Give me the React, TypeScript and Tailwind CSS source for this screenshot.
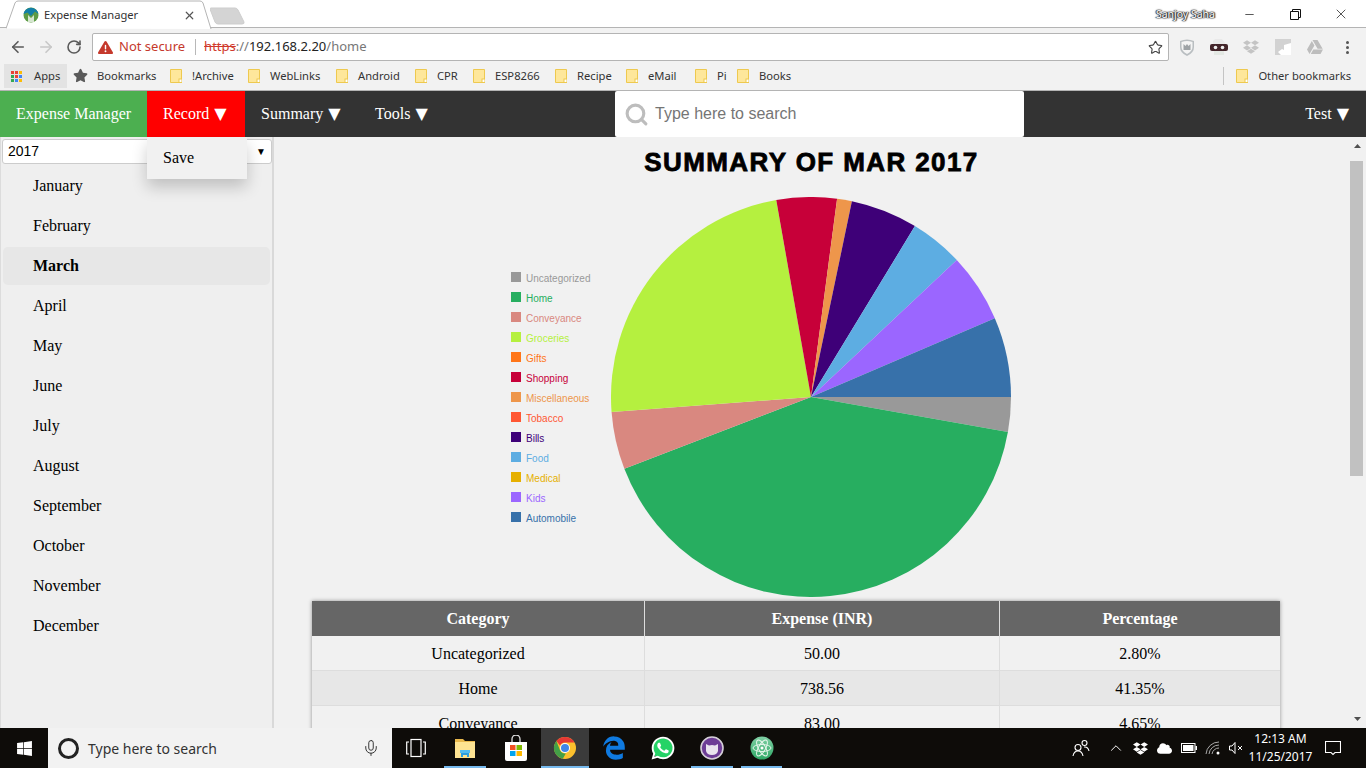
import React from "react";
import { ArrowLeft, ArrowRight, RotateCw, Star, Mic, ChevronUp, Minus, X, Search } from "lucide-react";
import { FaDropbox, FaGoogleDrive, FaWhatsapp, FaEdgeLegacy, FaCloud, FaWindows, FaStar, FaTriangleExclamation } from "react-icons/fa6";

const ui = "font-['Noto_Sans','Open_Sans',sans-serif]";
const serif = "font-['Liberation_Serif','Times_New_Roman',serif]";

const bookmarks = [
  { n: "!Archive", w: "w-[78px]" },
  { n: "WebLinks", w: "w-[88px]" },
  { n: "Android", w: "w-[79px]" },
  { n: "CPR", w: "w-[58px]" },
  { n: "ESP8266", w: "w-[82px]" },
  { n: "Recipe", w: "w-[71px]" },
  { n: "eMail", w: "w-[69px]" },
  { n: "Pi", w: "w-[42px]" },
  { n: "Books", w: "w-[70px]" },
];
const months = ["January","February","March","April","May","June","July","August","September","October","November","December"];
const legend: [string,string][] = [
  ["Uncategorized","#999999"],["Home","#27AE60"],["Conveyance","#D98880"],["Groceries","#B5F03F"],["Gifts","#FF7518"],["Shopping","#C70039"],["Miscellaneous","#EE964B"],["Tobacco","#FF5733"],["Bills","#3E0078"],["Food","#5DADE2"],["Medical","#E6B000"],["Kids","#9B66FF"],["Automobile","#3771AA"],
];
const wedges: [number,number,string][] = [
  [0,10.08,"#999999"],[10.08,158.94,"#27AE60"],[158.94,175.68,"#D98880"],[175.68,260,"#B5F03F"],[260,277.5,"#C70039"],[277.5,281.8,"#EE964B"],[281.8,301.3,"#3E0078"],[301.3,316.8,"#5DADE2"],[316.8,336.8,"#9B66FF"],[336.8,360,"#3771AA"],
];
function wedge(a: number, b: number) {
  const r = 200, c = 200, p = Math.PI / 180;
  const x1 = c + r * Math.cos(a * p), y1 = c + r * Math.sin(a * p), x2 = c + r * Math.cos(b * p), y2 = c + r * Math.sin(b * p);
  return `M${c} ${c}L${x1} ${y1}A${r} ${r} 0 ${b - a > 180 ? 1 : 0} 1 ${x2} ${y2}Z`;
}
const rows = [["Uncategorized","50.00","2.80%"],["Home","738.56","41.35%"],["Conveyance","83.00","4.65%"]];

function Tri() {
  return <span className="font-['DejaVu_Sans',sans-serif] text-[16px] leading-none"> ▼</span>;
}
function Folder() {
  return <svg width="12" height="14" viewBox="0 0 12 14" className="shrink-0"><path d="M.5.5h11v10l-2.500 3H.5z" fill="#fee79b" stroke="#eec94f"/><rect x="9" y="10" width="3" height="3.500" fill="#fff" stroke="#eec94f" strokeWidth="1"/></svg>;
}
function Favicon() {
  return <svg width="16" height="16" viewBox="0 0 16 16"><circle cx="8" cy="8" r="7.500" fill="#5d9b45"/><path d="M.6 7A7.500 7.500 0 0 1 15.400 7L12 4.500 8 9 4.500 5.500z" fill="#137fa8"/><path d="M5 15V8l3 3 3-3v7z" fill="#fff" opacity=".75"/></svg>;
}
function ChromeIcon() {
  return <svg width="24" height="24" viewBox="0 0 24 24"><circle cx="12" cy="12" r="11" fill="#fbc02d"/><path d="M12 1a11 11 0 0 1 9.500 5.500H12A5.500 5.500 0 0 0 7 9.500L3.400 5A11 11 0 0 1 12 1z" fill="#e53935"/><path d="M3.400 5 7.200 14.700a5.500 5.500 0 0 0 5.600 2.800L9.800 22.800A11 11 0 0 1 3.400 5z" fill="#43a047"/><circle cx="12" cy="12" r="5" fill="#fff"/><circle cx="12" cy="12" r="4" fill="#3f86e8"/></svg>;
}
function Folder2() {
  return <svg width="24" height="24" viewBox="0 0 24 24"><path d="M2 3h8l2 2h10v17H2z" fill="#e9b94d"/><rect x="2" y="6" width="20" height="16" fill="#fde392"/><path d="M8 21v-4h8v4h-2v-2h-4v2z" fill="#2d9fe0"/><rect x="7" y="14" width="10" height="3" fill="#54bdf1"/></svg>;
}
function StoreIcon() {
  return <svg width="24" height="26" viewBox="0 0 24 26"><path d="M8 7V4a4 4 0 0 1 8 0v3" fill="none" stroke="#ddd" strokeWidth="1.300"/><path d="M1 7h22v17a2 2 0 0 1-2 2H3a2 2 0 0 1-2-2z" fill="#fff"/><rect x="6" y="10" width="5.500" height="5" fill="#f25022"/><rect x="12.500" y="10" width="5.500" height="5" fill="#7fba00"/><rect x="6" y="16" width="5.500" height="5" fill="#00a4ef"/><rect x="12.500" y="16" width="5.500" height="5" fill="#ffb900"/></svg>;
}
function Whatsapp() {
  return (
    <span className="relative flex h-[26px] w-[26px] items-center justify-center">
      <span className="absolute h-[21px] w-[21px] rounded-full bg-[#25d366]" />
      <FaWhatsapp size={26} className="relative text-white" />
    </span>
  );
}
function CatIcon() {
  return <svg width="24" height="24" viewBox="0 0 24 24"><circle cx="12" cy="12" r="11" fill="#6d3d96" stroke="#d5d0d8" strokeWidth="1.600"/><path d="M6 8l3 1.500q3-.8 6 0L18 8v7q-1 4-6 4t-6-4z" fill="#e9e4ee"/></svg>;
}
function AtomIcon() {
  return <svg width="24" height="24" viewBox="0 0 24 24"><defs><linearGradient id="ag" x1="0" y1="0" x2="0" y2="1"><stop offset="0" stopColor="#7fd0a4"/><stop offset="1" stopColor="#2fa866"/></linearGradient></defs><circle cx="12" cy="12" r="11.500" fill="url(#ag)"/><g fill="none" stroke="#e4f5ea" strokeWidth="1"><ellipse cx="12" cy="12" rx="9" ry="3.500"/><ellipse cx="12" cy="12" rx="9" ry="3.500" transform="rotate(60 12 12)"/><ellipse cx="12" cy="12" rx="9" ry="3.500" transform="rotate(120 12 12)"/></g><circle cx="12" cy="12" r="1.500" fill="#fff"/></svg>;
}
function Cell({ w, active, line, children }: { w: string; active?: boolean; line?: boolean; children: React.ReactNode }) {
  return (
    <div className={`relative flex h-10 ${w} items-center justify-center ${active ? "bg-[#3b3b3b]" : ""}`}>
      {children}
      {line && <div className={`absolute bottom-0 h-[2px] bg-[#76b9ed] ${active ? "left-0 right-0" : "left-1 right-1"}`} />}
    </div>
  );
}

export default function App() {
  return (
    <div className={`flex h-[768px] w-[1366px] flex-col overflow-hidden bg-white ${ui}`}>
      {/* tab strip */}
      <div className="relative flex h-[28px] shrink-0 items-start border-b border-b-[#b4b4b4] bg-white">
        <div className="relative z-10 ml-[6px] flex h-[28px] w-[204px] items-center pl-[17px] pt-[2px]">
          <svg className="absolute left-0 top-0" width="206" height="29" viewBox="0 0 206 29"><path d="M0 28.500 9 3q1-2 3-2h182q2 0 3 2l8 26" fill="#fff" stroke="#b4b4b4"/></svg>
          <div className="relative flex w-[180px] items-center">
            <Favicon />
            <span className="ml-[5px] text-[11.2px] leading-none text-[#333]">Expense Manager</span>
            <X size={13} strokeWidth={2.2} className="absolute right-[7px] text-[#555]" />
          </div>
        </div>
        <svg className="mt-[7px]" width="35" height="18" viewBox="0 0 35 18"><path d="M1 1h24q2 0 3 2l6 12q.5 2-2 2H8q-2 0-3-2L0 2q0-1 1-1z" fill="#d4d4d4" stroke="#cdcdcd"/></svg>
        <div className="ml-auto flex h-[28px] items-center pr-[2px]">
          <span className="mr-[11px] text-[10.500px] leading-none text-white [text-shadow:0_0_1px_#222,0_0_2px_#222,1px_0_1px_#333,-1px_0_1px_#333]">Sanjoy Saha</span>
          <div className="flex h-[28px] w-[46px] items-center justify-center"><Minus size={13} strokeWidth={1.2} className="text-black" /></div>
          <div className="flex h-[28px] w-[46px] items-center justify-center">
            <svg width="11" height="11" viewBox="0 0 11 11" fill="none" stroke="#111"><path d="M.5 2.500h8v8h-8zM2.500 2.500v-2h8v8h-2"/></svg>
          </div>
          <div className="flex h-[28px] w-[46px] items-center justify-center"><X size={16} strokeWidth={1} className="text-black" /></div>
        </div>
      </div>
      {/* toolbar */}
      <div className="flex h-[34px] shrink-0 items-center bg-[#f2f2f2] pt-[4px]">
        <div className="flex w-[92px] shrink-0 items-center pl-[9px]">
          <ArrowLeft size={18} strokeWidth={2.2} className="text-[#5a5a5a]" />
          <ArrowRight size={18} strokeWidth={2.2} className="ml-[10px] text-[#c8c8c8]" />
          <RotateCw size={16} strokeWidth={2.4} className="ml-[11px] text-[#5a5a5a]" />
        </div>
        <div className="flex h-[28px] w-[1077px] shrink-0 items-center rounded-[2px] border border-[#b4b4b4] bg-white pl-[5px] text-[13px]">
          <FaTriangleExclamation size={15} className="text-[#c5392c]" />
          <span className="ml-[6px] text-[#c5392c]">Not secure</span>
          <span className="ml-[10px] h-[16px] w-px bg-[#b8b8b8]" />
          <span className="ml-[8px] text-[#d0392c] line-through">https</span>
          <span className="text-[#777]">://</span>
          <span className="text-[#222]">192.168.2.20</span>
          <span className="text-[#777]">/home</span>
          <Star size={15} strokeWidth={1.8} className="ml-auto mr-[5px] text-[#444]" />
        </div>
        <div className="flex flex-1 items-center pl-[2px]">
          <div className="flex w-[32px] justify-center"><svg width="16" height="17" viewBox="0 0 16 17"><path d="M1 2q7-3 14 0v6q0 6-7 9-7-3-7-9z" fill="#b9bec1"/><path d="M2.500 3q5.500-2 11 0v5q0 4-5.500 7-5.500-3-5.500-7z" fill="#f4f4f4"/><path d="M4.500 11V5l2 2 1.500-2 1.500 2 2-2v6z" fill="#9ea3a6"/></svg></div>
          <div className="flex w-[32px] justify-center"><svg width="18" height="16" viewBox="0 0 18 16"><path d="M5 0h7l3 4v3H3V2z" fill="#e9e9e9"/><rect x="0" y="5" width="18" height="7" rx="2" fill="#43252a"/><circle cx="5.500" cy="8.500" r="1.800" fill="#eee"/><circle cx="12.500" cy="8.500" r="1.800" fill="#eee"/><path d="M4 12h10v4H4z" fill="#e4e9e4"/></svg></div>
          <div className="flex w-[32px] justify-center"><FaDropbox size={16} className="text-[#c4c4c4]" /></div>
          <div className="flex w-[32px] justify-center"><svg width="16" height="16" viewBox="0 0 16 16"><rect width="16" height="16" fill="#d2d2d2"/><path d="M16 4v12H6l-3-3 4-3 2 1V6z" fill="#fff"/></svg></div>
          <div className="flex w-[32px] justify-center"><FaGoogleDrive size={16} className="text-[#bdbdbd]" /></div>
          <div className="flex w-[32px] flex-col items-center gap-[2px]"><span className="h-[3px] w-[3px] rounded-full bg-[#555]"/><span className="h-[3px] w-[3px] rounded-full bg-[#555]"/><span className="h-[3px] w-[3px] rounded-full bg-[#555]"/></div>
        </div>
      </div>
      {/* bookmarks */}
      <div className="flex h-[29px] shrink-0 items-center border-b border-b-[#b4b4b4] bg-[#f2f2f2] text-[11.200px] text-[#333]">
        <div className="ml-[4px] flex h-[24px] w-[63px] items-center bg-[#e3e3e3] pl-[7px]">
          <div className="grid grid-cols-3 gap-[1px]">
            {["#ea4335","#ea4335","#fbbc05","#34a853","#ea4335","#4285f4","#34a853","#4285f4","#fbbc05"].map((c, i) => <svg key={i} width="3" height="3"><rect width="3" height="3" fill={c}/></svg>)}
          </div>
          <span className="ml-[12px]">Apps</span>
        </div>
        <div className="flex w-[103px] items-center pl-[6px]">
          <FaStar size={15} className="text-[#5a5a5a]" />
          <span className="ml-[9px]">Bookmarks</span>
        </div>
        {bookmarks.map((b) => (
          <div key={b.n} className={`flex items-center ${b.w}`}>
            <Folder /><span className="ml-[10px]">{b.n}</span>
          </div>
        ))}
        <div className="ml-auto flex items-center pr-[15px]">
          <span className="mr-[12px] h-[18px] w-px bg-[#c4c4c4]" />
          <Folder /><span className="ml-[10px]">Other bookmarks</span>
        </div>
      </div>
      {/* nav */}
      <div className={`relative z-20 flex h-[46px] shrink-0 items-stretch bg-[#333] text-[16px] text-white ${serif}`}>
        <div className="flex items-center bg-[#4CAF50] px-4">Expense Manager</div>
        <div className="relative flex w-[98px] items-center whitespace-pre bg-[#ff0000] pl-4">
          Record<Tri />
          <div className="absolute left-0 top-[46px] flex h-[42px] w-[100px] items-center bg-[#f1f1f1] px-4 text-black shadow-[0_8px_16px_rgba(0,0,0,0.2)]">Save</div>
        </div>
        <div className="flex w-[114px] items-center whitespace-pre pl-4">Summary<Tri /></div>
        <div className="flex w-[86px] items-center whitespace-pre pl-4">Tools<Tri /></div>
        <div className="ml-[170px] flex w-[409px] items-center rounded-[2px] bg-white pl-[9px] font-['Liberation_Sans',Arial,sans-serif] text-[16px] text-[#757575]">
          <Search size={25} strokeWidth={3} className="text-[#bdbdbd]" />
          <span className="ml-[6px]">Type here to search</span>
        </div>
        <div className="ml-auto flex items-center whitespace-pre pr-[17px]">Test<Tri /></div>
      </div>
      {/* main */}
      <div className="flex min-h-0 flex-1 bg-[#f1f1f1]">
        <aside className={`flex w-[274px] shrink-0 flex-col border-l border-r-2 border-l-[#dcdcdc] border-r-[#d9d9d9] bg-[#efefef] pl-px pt-[2px] text-[16px] text-black ${serif}`}>
          <div className="flex h-[25px] items-center justify-between rounded-[3px] border border-[#ccc] bg-white pl-[5px] pr-[5px] font-['Liberation_Sans',Arial,sans-serif] text-[14px]">
            <span>2017</span><span className="text-[10px]">▼</span>
          </div>
          <div className="mt-[2px] flex flex-col">
            {months.map((m) => (
              <div key={m} className={m === "March" ? "my-px ml-px mr-[2px] flex h-[38px] items-center rounded-[5px] bg-[#e7e7e7] pl-[30px] font-bold" : "flex h-[40px] items-center pl-[31px]"}>{m}</div>
            ))}
          </div>
        </aside>
        <main className="flex min-w-0 flex-1 flex-col items-start overflow-hidden">
          <h1 className="mt-[8px] w-full text-center font-['Liberation_Sans',Arial,sans-serif] text-[26px] font-bold leading-[34px] tracking-[1.400px] text-black [-webkit-text-stroke:0.8px_black]">SUMMARY OF MAR 2017</h1>
          <div className="ml-[237px] mt-[18px] flex h-[400px] w-[600px] shrink-0 items-center">
            <div className="flex w-[100px] flex-col font-['Liberation_Sans',Arial,sans-serif] text-[10px] leading-[20px]">
              {legend.map(([n, c]) => (
                <div key={n} className="flex h-[20px] items-center">
                  <svg width="10" height="10" className="shrink-0"><rect width="10" height="10" fill={c}/></svg>
                  <span className="ml-[5px] mt-[3px]" style={{ color: c }}>{n}</span>
                </div>
              ))}
            </div>
            <svg width="400" height="400" viewBox="0 0 400 400" className="shrink-0">
              {wedges.map(([a, b, c]) => <path key={a} d={wedge(a, b)} fill={c} />)}
            </svg>
          </div>
          <div className={`ml-[38px] mt-[4px] w-[968px] shrink-0 text-[16px] text-black shadow-[0_0_4px_rgba(0,0,0,0.4)] ${serif}`}>
            <div className="grid h-[35px] grid-cols-[333px_355px_280px] items-center bg-[#666] text-center font-bold text-white">
              <div className="flex h-full items-center justify-center border-r border-r-[#ddd]">Category</div>
              <div className="flex h-full items-center justify-center border-r border-r-[#ddd]">Expense (INR)</div>
              <div>Percentage</div>
            </div>
            {rows.map((r, i) => (
              <div key={r[0]} className={`grid h-[35px] grid-cols-[333px_355px_280px] items-center border-b border-b-[#ddd] text-center ${i === 1 ? "bg-[#e7e7e7]" : "bg-[#f1f1f1]"}`}>
                <div className="flex h-full items-center justify-center border-r border-r-[#ddd] pt-[2px]">{r[0]}</div>
                <div className="flex h-full items-center justify-center border-r border-r-[#ddd] pt-[2px]">{r[1]}</div>
                <div className="pt-[2px]">{r[2]}</div>
              </div>
            ))}
          </div>
        </main>
        <div className="flex w-[17px] shrink-0 flex-col items-center bg-[#f1f1f1]">
          <svg width="9" height="17" viewBox="0 0 9 17" className="mt-[1px]"><path d="M4.500 6 8 10H1z" fill="#505050"/></svg>
          <div className="ml-[-3px] mt-[6px] h-[315px] w-[13px] bg-[#c1c1c1]" />
          <div className="flex-1" />
          <svg width="9" height="17" viewBox="0 0 9 17" className="mb-[1px]"><path d="M1 7h7l-3.500 4z" fill="#505050"/></svg>
        </div>
      </div>
      {/* taskbar */}
      <div className={`flex h-[40px] shrink-0 items-center bg-[#0e0c09] text-white ${ui}`}>
        <div className="flex h-10 w-[48px] items-center justify-center"><FaWindows size={17} className="text-white" /></div>
        <div className="flex h-10 w-[344px] items-center bg-[#f2f2f2] pl-[10px] text-[14px] text-[#333]">
          <span className="h-[21px] w-[21px] rounded-full border-[3px] border-[#222]" />
          <span className="ml-[9px]">Type here to search</span>
          <Mic size={18} strokeWidth={1.3} className="ml-auto mr-[12px] text-[#333]" />
        </div>
        <Cell w="w-[48px]">
          <svg width="20" height="20" viewBox="0 0 20 20" fill="none" stroke="#fff" strokeWidth="1.200"><rect x="5" y="1.500" width="10" height="17"/><path d="M3 4H.7v12H3M17 4h2.300v12H17"/></svg>
        </Cell>
        <Cell w="w-[50px]" line><Folder2 /></Cell>
        <Cell w="w-[51px]"><StoreIcon /></Cell>
        <Cell w="w-[48px]" active line><ChromeIcon /></Cell>
        <Cell w="w-[49px]"><FaEdgeLegacy size={24} className="text-[#0f7ae0]" /></Cell>
        <Cell w="w-[49px]"><Whatsapp /></Cell>
        <Cell w="w-[50px]" line><CatIcon /></Cell>
        <Cell w="w-[49px]" line><AtomIcon /></Cell>
        <div className="flex-1" />
        <div className="mr-[4px] flex h-10 w-[34px] items-center justify-center">
          <svg width="18" height="18" viewBox="0 0 18 18" fill="none" stroke="#fff" strokeWidth="1.100"><circle cx="6" cy="8.500" r="3"/><path d="M1 17q1-5 5-5t5 5"/><circle cx="12.500" cy="4" r="2.500"/><path d="M12 8q4-.5 5 4"/></svg>
        </div>
        <div className="ml-[2px] flex w-[24px] justify-center"><ChevronUp size={18} strokeWidth={1.3} /></div>
        <div className="flex w-[24px] justify-center"><FaDropbox size={15} /></div>
        <div className="flex w-[24px] justify-center"><FaCloud size={15} /></div>
        <div className="flex w-[26px] justify-center">
          <svg width="16" height="10" viewBox="0 0 16 10"><rect x=".5" y=".5" width="13.500" height="9" fill="none" stroke="#fff"/><rect x="2" y="2" width="10.500" height="6" fill="#fff"/><rect x="14.500" y="3" width="1.500" height="4" fill="#fff"/></svg>
        </div>
        <div className="flex w-[22px] justify-center">
          <svg width="16" height="14" viewBox="0 0 16 14" fill="none" stroke="#aaa" strokeWidth="1"><path d="M1 13A13 13 0 0 1 14 1M4 13A10 10 0 0 1 14 4M7 13a7 7 0 0 1 7-6"/><circle cx="13" cy="12" r="1.500" fill="#fff" stroke="none"/></svg>
        </div>
        <div className="flex w-[24px] justify-center">
          <svg width="15" height="14" viewBox="0 0 15 14" fill="none" stroke="#fff" strokeWidth="1"><path d="M.5 5v4h2.500l3 3.500v-11L3 5zM9 5l4 4M13 5l-4 4"/></svg>
        </div>
        <div className="mr-[4px] flex w-[65px] flex-col items-center whitespace-nowrap text-[12px] leading-[18px]">
          <span>12:13 AM</span><span>11/25/2017</span>
        </div>
        <div className="ml-[2px] mr-[19px] flex w-[28px] justify-center">
          <svg width="16" height="16" viewBox="0 0 16 16" fill="none" stroke="#fff" strokeWidth="1.100"><path d="M.5 1.500h15v11H10l-2 2-2-2H.5z"/></svg>
        </div>
      </div>
    </div>
  );
}
